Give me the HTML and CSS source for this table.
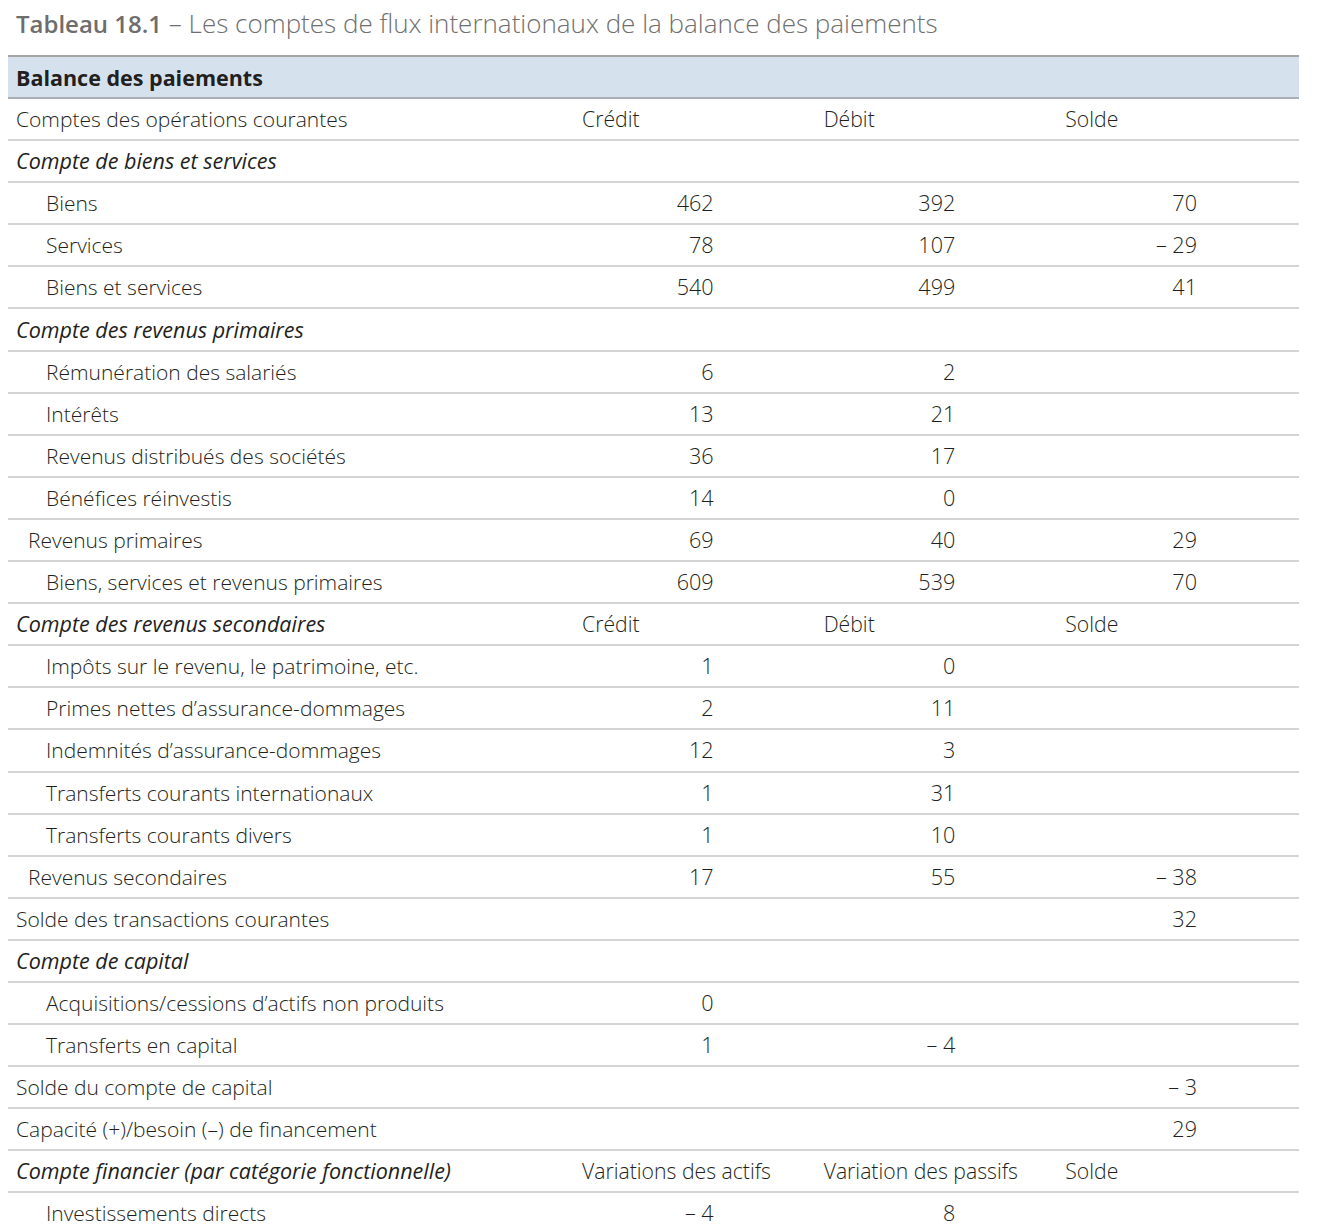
FILE: index.html
```html
<!DOCTYPE html>
<html lang="fr">
<head>
<meta charset="utf-8">
<title>Tableau 18.1</title>
<link rel="stylesheet" href="styles.css">
</head>
<body>
<h1 class="title"><span class="title-num">Tableau 18.1</span> – Les comptes de flux internationaux de la balance des paiements</h1>
<table class="bop">
  <colgroup>
    <col class="c-label"><col class="c-num"><col class="c-num"><col class="c-num">
  </colgroup>
  <thead>
    <tr class="band"><th colspan="4">Balance des paiements</th></tr>
  </thead>
  <tbody>
    <tr><td>Comptes des opérations courantes</td><td class="hd">Crédit</td><td class="hd">Débit</td><td class="hd">Solde</td></tr>
    <tr class="sec"><td>Compte de biens et services</td><td></td><td></td><td></td></tr>
    <tr><td class="i2">Biens</td><td class="n">462</td><td class="n">392</td><td class="n">70</td></tr>
    <tr><td class="i2">Services</td><td class="n">78</td><td class="n">107</td><td class="n">– 29</td></tr>
    <tr><td class="i2">Biens et services</td><td class="n">540</td><td class="n">499</td><td class="n">41</td></tr>
    <tr class="sec"><td>Compte des revenus primaires</td><td></td><td></td><td></td></tr>
    <tr><td class="i2">Rémunération des salariés</td><td class="n">6</td><td class="n">2</td><td></td></tr>
    <tr><td class="i2">Intérêts</td><td class="n">13</td><td class="n">21</td><td></td></tr>
    <tr><td class="i2">Revenus distribués des sociétés</td><td class="n">36</td><td class="n">17</td><td></td></tr>
    <tr><td class="i2">Bénéfices réinvestis</td><td class="n">14</td><td class="n">0</td><td></td></tr>
    <tr><td class="i1">Revenus primaires</td><td class="n">69</td><td class="n">40</td><td class="n">29</td></tr>
    <tr><td class="i2">Biens, services et revenus primaires</td><td class="n">609</td><td class="n">539</td><td class="n">70</td></tr>
    <tr class="sec"><td>Compte des revenus secondaires</td><td class="hd">Crédit</td><td class="hd">Débit</td><td class="hd">Solde</td></tr>
    <tr><td class="i2">Impôts sur le revenu, le patrimoine, etc.</td><td class="n">1</td><td class="n">0</td><td></td></tr>
    <tr><td class="i2">Primes nettes d’assurance-dommages</td><td class="n">2</td><td class="n">11</td><td></td></tr>
    <tr><td class="i2">Indemnités d’assurance-dommages</td><td class="n">12</td><td class="n">3</td><td></td></tr>
    <tr><td class="i2">Transferts courants internationaux</td><td class="n">1</td><td class="n">31</td><td></td></tr>
    <tr><td class="i2">Transferts courants divers</td><td class="n">1</td><td class="n">10</td><td></td></tr>
    <tr><td class="i1">Revenus secondaires</td><td class="n">17</td><td class="n">55</td><td class="n">– 38</td></tr>
    <tr><td>Solde des transactions courantes</td><td></td><td></td><td class="n">32</td></tr>
    <tr class="sec"><td>Compte de capital</td><td></td><td></td><td></td></tr>
    <tr><td class="i2">Acquisitions/cessions d’actifs non produits</td><td class="n">0</td><td></td><td></td></tr>
    <tr><td class="i2">Transferts en capital</td><td class="n">1</td><td class="n">– 4</td><td></td></tr>
    <tr><td>Solde du compte de capital</td><td></td><td></td><td class="n">– 3</td></tr>
    <tr><td>Capacité (+)/besoin (–) de financement</td><td></td><td></td><td class="n">29</td></tr>
    <tr class="sec"><td>Compte financier (par catégorie fonctionnelle)</td><td class="hd">Variations des actifs</td><td class="hd">Variation des passifs</td><td class="hd">Solde</td></tr>
    <tr><td class="i2">Investissements directs</td><td class="n">– 4</td><td class="n">8</td><td></td></tr>
  </tbody>
</table>
</body>
</html>
```

FILE: styles.css
```css
html, body {
  background: #ffffff;
}
body {
  margin: 8px;
  font-family: "Open Sans", "Noto Sans", sans-serif;
  color: #231f20;
}
.title {
  margin: 0 0 0 8px;
  height: 47px;
  font-size: 26px;
  line-height: 31px;
  font-weight: 300;
  color: #6f6f6f;
  white-space: nowrap;
}
.title-num {
  font-size: 24px;
  font-weight: 600;
  color: #6d6d6d;
}
.bop {
  width: 1291px;
  border-collapse: collapse;
  table-layout: fixed;
  font-size: 21px;
  font-weight: 300;
}
.c-label { width: 566px; }
.c-num { width: 241.67px; }
.band th {
  height: 40px;
  background: #d5e2ed;
  border-top: 2px solid #a5a5a5;
  border-bottom: 2px solid #a9afb5;
  text-align: left;
  padding: 0 8px;
  font-size: 21.5px;
  font-weight: 700;
  color: #231f20;
}
.bop td {
  height: 40.1px;
  padding: 0 8px;
  border-bottom: 2px solid #d4d4d4;
  white-space: nowrap;
  vertical-align: middle;
  line-height: 26px;
}
.bop td.i1 { padding-left: 20px; }
.bop td.i2 { padding-left: 38px; }
.sec td:first-child {
  font-style: italic;
  font-weight: 400;
  font-size: 21.5px;
}
.bop td.hd {
  font-size: 21.2px;
}
.bop td.n {
  text-align: right;
  padding-right: 102px;
  font-size: 21.6px;
}
```
